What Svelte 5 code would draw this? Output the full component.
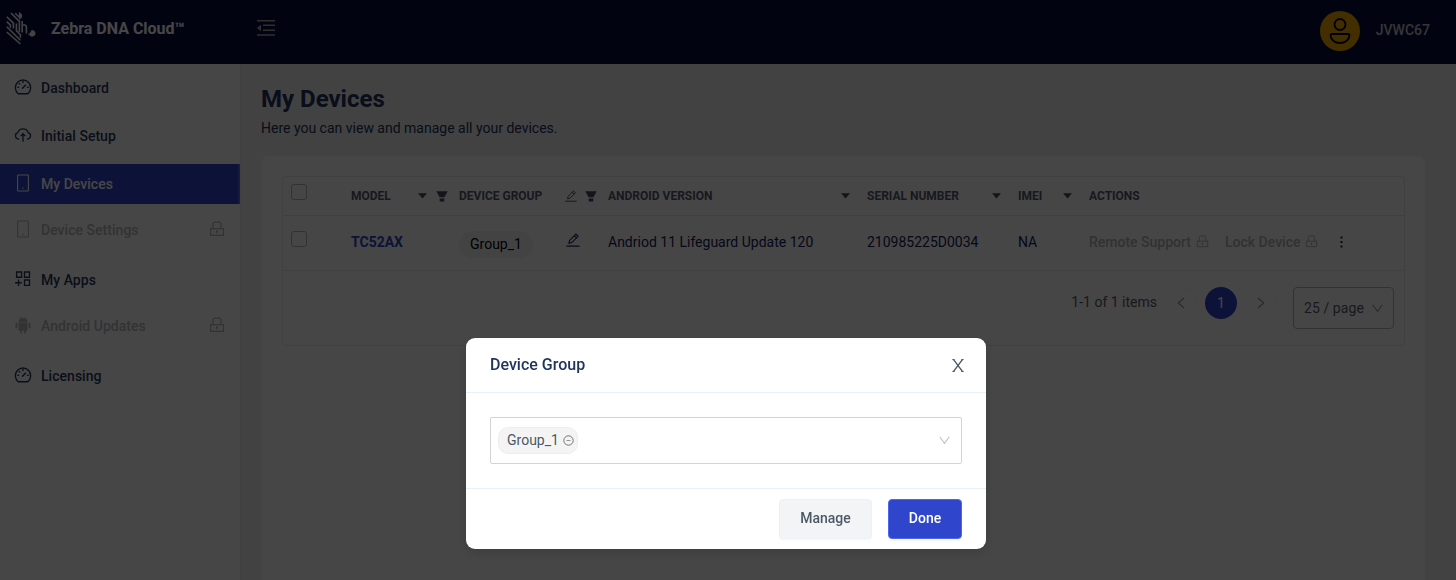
<script>
  const nav = [
    { label: 'Dashboard', icon: 'gauge' },
    { label: 'Initial Setup', icon: 'cloud' },
    { label: 'My Devices', icon: 'phone', active: true },
    { label: 'Device Settings', icon: 'phone', locked: true },
    { label: 'My Apps', icon: 'apps' },
    { label: 'Android Updates', icon: 'android', locked: true },
    { label: 'Licensing', icon: 'gauge' }
  ];
</script>

{#snippet lock(size)}
  <svg width={size} height={size} viewBox="0 0 16 16" fill="none" stroke="currentColor" stroke-width="1.2">
    <path d="M1.6 7.6h12.8v6.8H1.6zM4 7.6V3.2q0-2 2-2h4q2 0 2 2v4.4M8 10v2.4" /><circle cx="8" cy="10.4" r=".5" />
  </svg>
{/snippet}

{#snippet pencil(size)}
  <svg width={size} height={size} viewBox="0 0 14 14" fill="none" stroke="currentColor" stroke-width="1.1">
    <path d="M.4 13.1h13.2M3 10.2l.6-2.8 6.3-6.3 2.2 2.2-6.3 6.3zM8.4 2.6l2.2 2.2" />
  </svg>
{/snippet}

{#snippet caret()}
  <svg class="caret" width="9" height="6" viewBox="0 0 9 6"><path d="M0 .3h9L4.5 5.6z" fill="currentColor" /></svg>
{/snippet}

{#snippet funnel()}
  <svg class="funnel" width="12" height="11" viewBox="0 0 12 11"><path d="M.3.2h11.4L8.4 6.3H3.6zM3.7 7.5h4.6v3H3.7z" fill="currentColor" /></svg>
{/snippet}

{#snippet navIcon(name)}
  <svg width="18" height="18" viewBox="0 0 18 18" fill="none" stroke="currentColor" stroke-width="1.35">
    {#if name === 'gauge'}
      <path d="M4.2 15.7A7.7 7.7 0 1 1 13.8 15.7zM8.5 10.3l3.3-3.6M9 3v2M3.2 9.4h1.9M12.9 9.4h1.9M4.8 5.2l1.3 1.3" />
      <circle cx="8.5" cy="10.2" r=".7" fill="currentColor" stroke="none" />
    {:else if name === 'cloud'}
      <path d="M5.2 13.1H4.6A3.3 3.3 0 0 1 3.7 6.7a5.6 5.6 0 0 1 10.6 0 3.3 3.3 0 0 1-.9 6.4h-.6M9 15.7V8M6.7 10.1 9 7.7l2.3 2.4" />
    {:else if name === 'phone'}
      <rect x="3.6" y="1" width="10.8" height="16" rx=".5" stroke-width="1.1" /><circle cx="9" cy="14.2" r=".7" fill="currentColor" stroke="none" />
    {:else if name === 'apps'}
      <path d="M2.6 2h5v5.2h-5zM10.5 2h5v5.2h-5zM10.5 10h5v5.3h-5zM1.1 12.7h6.7M4.5 9.5v6.4" />
    {:else}
      <path fill="currentColor" stroke="none" d="M4.5 6.2C4.6 4.2 5.5 3 6.8 2.3L5.7.7l.5-.3 1.2 1.7q1.6-.4 3.2 0L11.8.4l.5.3-1.1 1.6c1.3.7 2.2 1.9 2.3 3.9zM4.5 6.8h9v7q0 .9-.9.9h-.8V17q0 .8-.8.8t-.8-.8v-2.3H7.8V17q0 .8-.8.8t-.8-.8v-2.3h-.8q-.9 0-.9-.9zM1.5 7.4q0-.9.9-.9t.9.9v4q0 .9-.9.9t-.9-.9zM14.7 7.4q0-.9.9-.9t.9.9v4q0 .9-.9.9t-.9-.9z" />
    {/if}
  </svg>
{/snippet}

<div class="app">
  <header class="topbar">
    <svg class="logo" width="31" height="33" viewBox="0 0 31 33" fill="none" stroke="#fff" stroke-width="1.6">
      <path d="M.8 4.8 7.4 11.2v5.4M5 1.2l8.4 8.1v10.4M.8 9.6l3.6 3.6v2.6M.8 14.8l13.6 13.4M.8 20l13.6 12M9.2 1.2l4.4 4.3M10.4 11.4v7.2l4 4.2v3M16.2 9v11.6M16.2 13h2.2q2 0 2 2.2v6.4" />
      <path fill="#fff" stroke="none" d="M12.8 0q4 1.5 3.2 5.3L13.3 8zM25.6 17.9c2.4.2 3.9 1.5 3.9 3.4a3.3 3.3 0 0 1-6.4 1.1l-1.6-.2q3.4-1.3 4.1-4.3z" />
    </svg>
    <span class="brand">Zebra DNA Cloud™</span>
    <svg class="fold" width="18" height="16" viewBox="0 0 18 16" fill="#aaa">
      <path d="M0 0h18v1.6H0zM6 4.6h12v1.4H6zM6 9.6h12V11H6zM0 14.2h18v1.6H0zM0 8l4-3.2v6.4z" />
    </svg>
    <div class="user">
      <span class="avatar">
        <svg width="22" height="26" viewBox="0 0 22 26" fill="none" stroke="#000" stroke-width="1.9">
          <circle cx="11" cy="6.5" r="5.5" /><path d="M3 16h16q1.6 0 1.4 1.6C20 22.1 16 25 11 25S2 22.1 1.6 17.6Q1.4 16 3 16z" />
        </svg>
      </span>
      <span class="username">JVWC67</span>
    </div>
  </header>

  <div class="body">
    <nav class="sidebar">
      {#each nav as item}
        <a class="item" class:active={item.active} class:locked={item.locked}>
          {@render navIcon(item.icon)}
          <span>{item.label}</span>
          {#if item.locked}<i class="lock">{@render lock(16)}</i>{/if}
        </a>
      {/each}
    </nav>

    <main>
      <h1>My Devices</h1>
      <p>Here you can view and manage all your devices.</p>
      <section class="card">
        <div class="table">
          <div class="row head">
            <span class="box"></span>
            <div class="cell">MODEL <span class="tools model">{@render caret()}{@render funnel()}</span></div>
            <div class="cell">DEVICE GROUP <span class="tools group">{@render pencil(12)}{@render funnel()}</span></div>
            <div class="cell">ANDROID VERSION <span class="tools version">{@render caret()}</span></div>
            <div class="cell">SERIAL NUMBER <span class="tools serial">{@render caret()}</span></div>
            <div class="cell">IMEI <span class="tools imei">{@render caret()}</span></div>
            <div class="cell">ACTIONS</div>
          </div>
          <div class="row data">
            <span class="box"></span>
            <a class="device value">TC52AX</a>
            <div class="cell"><span class="chip">Group_1</span><span class="edit">{@render pencil(14)}</span></div>
            <span class="value">Andriod 11 Lifeguard Update 120</span>
            <span class="value">210985225D0034</span>
            <span class="value">NA</span>
            <div class="actions">
              <span>Remote Support</span>{@render lock(13)}
              <span class="second">Lock Device</span>{@render lock(13)}
              <svg class="dots" width="3" height="12" viewBox="0 0 3 12"><path d="M.5.5h2v2h-2zM.5 5h2v2h-2zM.5 9.5h2v2h-2z" fill="#17205a" /></svg>
            </div>
          </div>
          <div class="pager">
            <span class="total">1-1 of 1 items</span>
            <span class="arrow"><svg width="8" height="12" viewBox="0 0 8 12"><path d="M7 1 1.3 6 7 11" /></svg></span>
            <span class="page">1</span>
            <span class="arrow"><svg width="8" height="12" viewBox="0 0 8 12"><path d="m1 1 5.7 5L1 11" /></svg></span>
            <span class="size">25 / page <svg width="11" height="9" viewBox="0 0 11 9"><path d="m.7.8 4.8 6.6L10.3.8" /></svg></span>
          </div>
        </div>
      </section>
    </main>
  </div>
</div>

<div class="mask">
  <div class="dialog">
    <div class="dialog-head">
      <h2>Device Group</h2>
      <svg width="12" height="13" viewBox="0 0 12 13" fill="none" stroke="#4b5866"><path stroke-width="1.4" d="m1.6.7 8.8 11.6M10.4.7 1.6 12.3" /><path d="M.3.6h2.4M9.3.6h2.4M.3 12.4h2.4M9.3 12.4h2.4" /></svg>
    </div>
    <div class="dialog-body">
      <div class="select">
        <span class="tag"><span>Group_1</span>
          <svg width="11" height="11" viewBox="0 0 11 11" fill="none" stroke="#555"><circle cx="5.5" cy="5.5" r="4.7" stroke-width=".8" /><path d="M3.5 5.5h4" stroke-width=".6" /></svg>
        </span>
        <svg width="11" height="9" viewBox="0 0 11 9" fill="none" stroke="#bfbfbf" stroke-width="1.1"><path d="m.7.8 4.8 6.6L10.3.8" /></svg>
      </div>
    </div>
    <div class="dialog-foot">
      <button class="manage">Manage</button>
      <button class="done">Done</button>
    </div>
  </div>
</div>

<style>
  :global(body) { overflow: hidden; }
  .app, .mask { font-family: Roboto, sans-serif; font-size: 14px; color: #17205a; }
  .app { height: 580px; display: flex; flex-direction: column; background: #f0f0f0; }
  svg { display: block; flex: none; }
  .topbar { height: 64px; flex: none; display: flex; align-items: center; background: #070e40; color: #fff; box-sizing: border-box; padding: 0 26px 4px 6px; }
  .logo { opacity: .95; margin-top: -3px; }
  .brand { width: 206px; margin-left: 14px; margin-top: -3px; font-size: 16px; font-weight: 700; white-space: nowrap; }
  .fold { margin-top: -4px; }
  .user { margin-left: auto; display: flex; align-items: center; gap: 16px; font-weight: 500; color: #c0c0c0; margin-top: 1px; }
  .username { margin-top: -2px; }
  .avatar { width: 40px; height: 40px; border-radius: 50%; background: #f5a800; display: grid; place-items: center; }
  .body { flex: 1; display: flex; min-height: 0; }
  .sidebar { width: 241px; box-sizing: border-box; flex: none; background: #fff; padding-top: 4px; border-right: 1px solid #eaeaea; display: flex; flex-direction: column; gap: 8px; }
  .item { height: 40px; box-sizing: border-box; display: flex; align-items: center; gap: 9.5px; padding: 0 15px 0 13.5px; font-weight: 500; letter-spacing: .03px; color: #28385c; }
  .item > svg { margin-top: -2px; }
  .item.active { background: #2f46cc; color: #fff; border-right: 2px solid #4967ee; }
  .item.locked { color: #b8b8b8; margin: -2px 0 2px; }
  .lock { margin-left: auto; margin-top: -2px; }
  main { flex: 1; padding: 20px 31px 0 20px; display: flex; flex-direction: column; }
  h1 { margin: 0; font-size: 24px; line-height: 30px; font-weight: 700; color: #21345e; }
  p { margin: 4px 0 17px; line-height: 20px; color: #21345e; }
  .card { flex: 1; background: #fff; border-radius: 8px 8px 0 0; padding: 20px 20px 0 21px; margin-top: 1px; }
  .table { height: 168px; border: 1px solid #eaeaee; border-radius: 4px; }
  .row { display: grid; grid-template-columns: 68px 108px 149px 259px 151px 71px 1fr; align-items: center; border-bottom: 1px solid #eaeaee; }
  .head { height: 38px; font-size: 12px; font-weight: 700; color: #555c70; }
  .data { height: 54px; }
  .value { margin-top: -2px; }
  .box { width: 14px; height: 14px; border: 1px solid #b5b5b5; border-radius: 3px; margin: -8px 0 0 8px; }
  .cell { display: flex; align-items: center; }
  .tools { margin-left: auto; display: flex; align-items: center; color: #454e60; }
  .model { gap: 9px; margin-right: 11px; }
  .group { gap: 8px; margin-right: 11px; }
  .version { margin-right: 17px; }
  .serial { margin-right: 17px; }
  .imei { margin-right: 17px; }
  .device { font-weight: 700; color: #2f46cc; }
  .chip { background: #f4f4f4; color: #000; border-radius: 14px; padding: 0 11px; line-height: 27px; margin-top: 2px; }
  .edit { margin: -6px 0 0 33px; }
  .actions { display: flex; align-items: center; font-weight: 500; color: #b5b5b5; margin-top: -3px; }
  .actions svg { margin-left: 5px; }
  .actions .second { margin-left: 16px; }
  .actions .dots { margin-left: 22px; }
  .pager { display: flex; justify-content: flex-end; padding: 16px 10px 0 0; color: #555c70; }
  .pager svg { fill: none; stroke: #999; stroke-width: 1.1; }
  .total { line-height: 30px; margin-right: 8px; }
  .arrow { width: 30px; height: 30px; border: 1px solid #f8f8f8; border-radius: 50%; display: grid; place-items: center; }
  .page { width: 32px; height: 32px; margin: 0 8px; border-radius: 50%; background: #2f46cc; color: #fff; text-align: center; line-height: 32px; }
  .size { width: 99px; height: 40px; box-sizing: content-box; border: 1px solid #b5b5b5; border-radius: 4px; margin-left: 16px; display: flex; align-items: center; justify-content: center; gap: 8px; letter-spacing: .08px; }
  .mask { position: fixed; inset: 0; background: rgba(0, 0, 0, .725); padding: 338px 0 0 466px; }
  .dialog { width: 520px; height: 211px; background: #fff; border-radius: 9px; box-shadow: 0 4px 12px rgba(0, 0, 0, .15); }
  .dialog-head { height: 54px; padding: 0 22px 0 24px; border-bottom: 1px solid #e8f1f8; display: flex; align-items: center; justify-content: space-between; }
  h2 { margin: -2px 0 0; font-size: 16px; font-weight: 500; color: #21345e; }
  .dialog-body { height: 95px; box-sizing: border-box; padding: 24px; }
  .select { height: 45px; border: 1px solid #d4d4d4; border-radius: 2px; display: flex; align-items: center; justify-content: space-between; padding: 0 11px 0 7px; }
  .tag { height: 25px; border: 1px solid #eee; border-radius: 10px; background: #f4f4f4; color: #4b5866; display: flex; align-items: center; gap: 4px; padding: 0 3.5px 0 8px; }
  .tag span { margin-top: -2px; }
  .dialog-foot { height: 60px; border-top: 1px solid #e8f1f8; display: flex; justify-content: flex-end; gap: 16px; padding: 10px 24px 0 0; box-sizing: border-box; }
  button { height: 40px; font: 500 14px Roboto, sans-serif; border-radius: 4px; border: 1px solid #edf1f6; padding: 0 0 2px; box-shadow: 0 2px 2px rgba(0, 0, 0, .025); }
  .manage { width: 93px; background: #f3f4f6; color: #4b5866; }
  .done { width: 74px; background: #2f46cc; border-color: #4a68ef; color: #fff; }
</style>
